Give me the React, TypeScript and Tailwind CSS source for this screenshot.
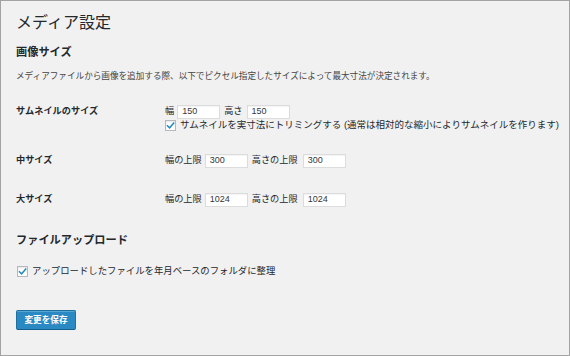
import React from "react";

const font = { fontFamily: '"Liberation Sans", "Noto Sans CJK JP", sans-serif' };

function Check() {
  return (
    <span className="flex h-[11px] w-[11px] shrink-0 items-center justify-center border border-[#b4b9be] bg-white shadow-[inset_0_1px_2px_rgba(0,0,0,0.1)]">
      <svg width="9" height="9" viewBox="0 0 10 10">
        <path d="M1.6 5.2 L4 7.6 L8.6 2.2" fill="none" stroke="#1e8cbe" strokeWidth="1.6" strokeLinecap="square" />
      </svg>
    </span>
  );
}

function Input({ value }: { value: string }) {
  return (
    <span className="flex h-[14px] w-[43px] shrink-0 items-center border border-[#dcdcdc] bg-white pl-[4px] text-[9px] text-[#32373c] shadow-[inset_0_1px_1px_rgba(0,0,0,0.05)]">
      {value}
    </span>
  );
}

export default function App() {
  return (
    <div
      className="h-[356px] w-[570px] overflow-hidden border border-[#a3a3a3] bg-[#f1f1f1] pl-[15px] text-[#23282d]"
      style={font}
    >
      <div className="flex flex-col">
        <h1 className="mt-[12px] text-[16px] leading-[20px] font-normal">メディア設定</h1>
        <h2 className="mt-[12px] text-[11.2px] leading-[14px] font-bold">画像サイズ</h2>
        <p className="mt-[11px] text-[8.6px] leading-[12px] text-[#444]">
          メディアファイルから画像を追加する際、以下でピクセル指定したサイズによって最大寸法が決定されます。
        </p>

        <div className="mt-[23px] flex">
          <div className="flex h-[14px] w-[149px] items-center text-[9.2px] font-bold">サムネイルのサイズ</div>
          <div className="flex flex-col text-[9.2px]">
            <div className="flex h-[14px] items-center">
              <span>幅</span>
              <span className="ml-[3px]"><Input value="150" /></span>
              <span className="ml-[4px]">高さ</span>
              <span className="ml-[4px]"><Input value="150" /></span>
            </div>
            <div className="mt-[1px] flex h-[11px] items-center">
              <Check />
              <span className="ml-[4px] whitespace-nowrap text-[9.5px]">
                サムネイルを実寸法にトリミングする (通常は相対的な縮小によりサムネイルを作ります)
              </span>
            </div>
          </div>
        </div>

        <div className="mt-[23px] flex">
          <div className="flex h-[14px] w-[149px] items-center text-[9.2px] font-bold">中サイズ</div>
          <div className="flex h-[14px] items-center text-[9.2px]">
            <span>幅の上限</span>
            <span className="ml-[3px]"><Input value="300" /></span>
            <span className="ml-[4px]">高さの上限</span>
            <span className="ml-[5px]"><Input value="300" /></span>
          </div>
        </div>

        <div className="mt-[25px] flex">
          <div className="flex h-[14px] w-[149px] items-center text-[9.2px] font-bold">大サイズ</div>
          <div className="flex h-[14px] items-center text-[9.2px]">
            <span>幅の上限</span>
            <span className="ml-[3px]"><Input value="1024" /></span>
            <span className="ml-[4px]">高さの上限</span>
            <span className="ml-[5px]"><Input value="1024" /></span>
          </div>
        </div>

        <h2 className="mt-[26px] text-[11.2px] leading-[14px] font-bold">ファイルアップロード</h2>

        <div className="mt-[19px] ml-[1px] flex h-[11px] items-center">
          <Check />
          <span className="ml-[4px] whitespace-nowrap text-[9.4px]">
            アップロードしたファイルを年月ベースのフォルダに整理
          </span>
        </div>

        <div className="mt-[33px]">
          <button className="flex h-[20px] w-[60px] items-center justify-center rounded-[2px] border border-[#1f6f9f] border-b-[#135e8a] bg-[#2a88c2] text-[8.6px] font-bold text-white shadow-[inset_0_1px_0_rgba(120,200,230,0.5)]">
            変更を保存
          </button>
        </div>
      </div>
    </div>
  );
}
